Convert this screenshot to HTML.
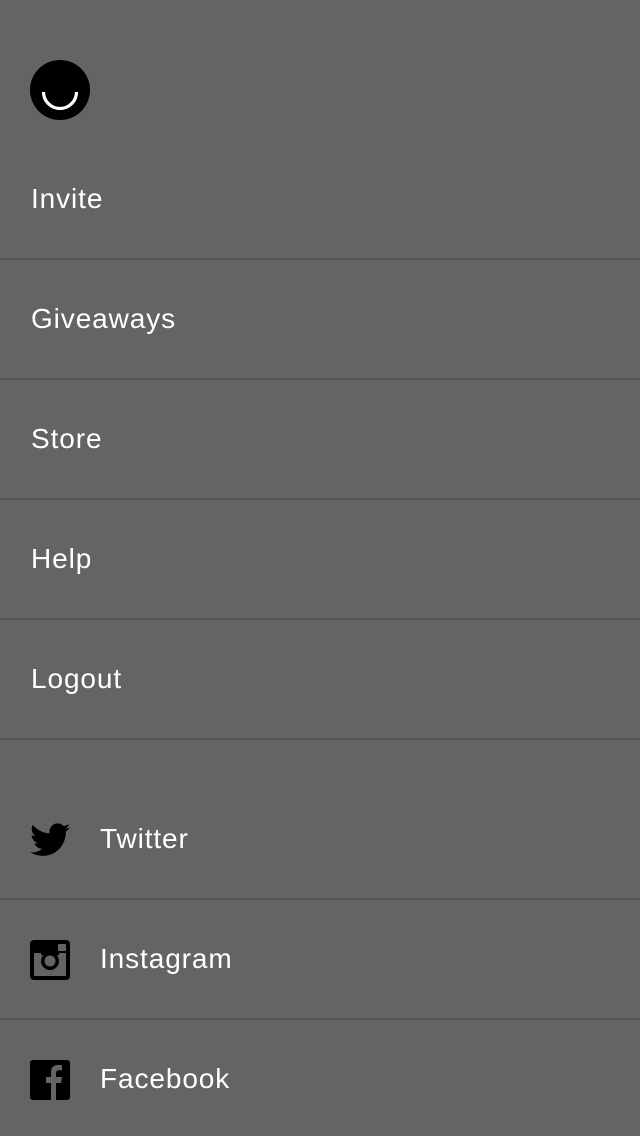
<!DOCTYPE html>
<html><head><meta charset="utf-8"><style>
html,body{margin:0;padding:0;}
body{width:640px;height:1136px;background:#646464;position:relative;overflow:hidden;font-family:"Liberation Sans",sans-serif;color:#fff;}
.t{position:absolute;left:31px;font-size:28px;line-height:40px;letter-spacing:0.9px;}
.l{position:absolute;left:0;width:640px;height:2px;background:#555;}
svg{position:absolute;}
</style></head><body>
<svg style="left:30px;top:60px" width="60" height="60" viewBox="0 0 60 60"><circle cx="30" cy="30" r="30" fill="#000"/><path d="M13.5 32 A16.5 16.5 0 0 0 46.5 32" fill="none" stroke="#fff" stroke-width="3.2"/></svg>
<div class="t" style="top:179px">Invite</div>
<div class="l" style="top:258px"></div>
<div class="t" style="top:299px">Giveaways</div>
<div class="l" style="top:378px"></div>
<div class="t" style="top:419px">Store</div>
<div class="l" style="top:498px"></div>
<div class="t" style="top:539px">Help</div>
<div class="l" style="top:618px"></div>
<div class="t" style="top:659px">Logout</div>
<div class="l" style="top:738px"></div>
<svg style="left:30px;top:822px" width="40" height="36" viewBox="0 0 24 20"><path fill="#000" d="M24 2.4c-.9.4-1.8.6-2.8.8 1-.6 1.8-1.6 2.2-2.7-1 .6-2 1-3.1 1.2C19.3.7 18 0 16.6 0c-2.7 0-4.9 2.2-4.9 4.9 0 .4 0 .8.1 1.1C7.700 5.800 4.100 3.900 1.700.9c-.4.7-.7 1.600-.7 2.500 0 1.700.9 3.200 2.200 4.100-.8 0-1.600-.2-2.200-.6v.1c0 2.400 1.700 4.400 3.900 4.800-.4.1-.8.2-1.300.2-.3 0-.6 0-.9-.1.6 2 2.400 3.400 4.600 3.400-1.700 1.300-3.800 2.100-6.100 2.100-.4 0-.8 0-1.200-.1 2.200 1.400 4.800 2.200 7.500 2.200 9.100 0 14-7.500 14-14v-.6c1-.7 1.800-1.600 2.500-2.500z"/></svg>
<div class="t" style="top:819px;left:100px">Twitter</div>
<div class="l" style="top:898px"></div>
<svg style="left:30px;top:940px" width="40" height="40" viewBox="0 0 40 40"><rect x="0" y="0" width="40" height="40" rx="4" fill="#000"/><rect x="4" y="13" width="32" height="23" rx="1" fill="#646464"/><rect x="28" y="4" width="8" height="7" rx="1" fill="#646464"/><rect x="11" y="11" width="18" height="4" fill="#000"/><circle cx="20" cy="21" r="9" fill="#000"/><circle cx="20" cy="21" r="5.5" fill="#646464"/></svg>
<div class="t" style="top:939px;left:100px">Instagram</div>
<div class="l" style="top:1018px"></div>
<svg style="left:30px;top:1060px" width="40" height="40" viewBox="0 0 40 40"><rect x="0" y="0" width="40" height="40" rx="3" fill="#000"/><path fill="#646464" d="M21 40V23h-5v-6h5v-5c0-5 3-7 7-7 2 0 3 .1 4 .2v5h-3c-2 0-3 1-3 3v3.8h6l-1 6h-5V40z"/></svg>
<div class="t" style="top:1059px;left:100px">Facebook</div>
</body></html>
